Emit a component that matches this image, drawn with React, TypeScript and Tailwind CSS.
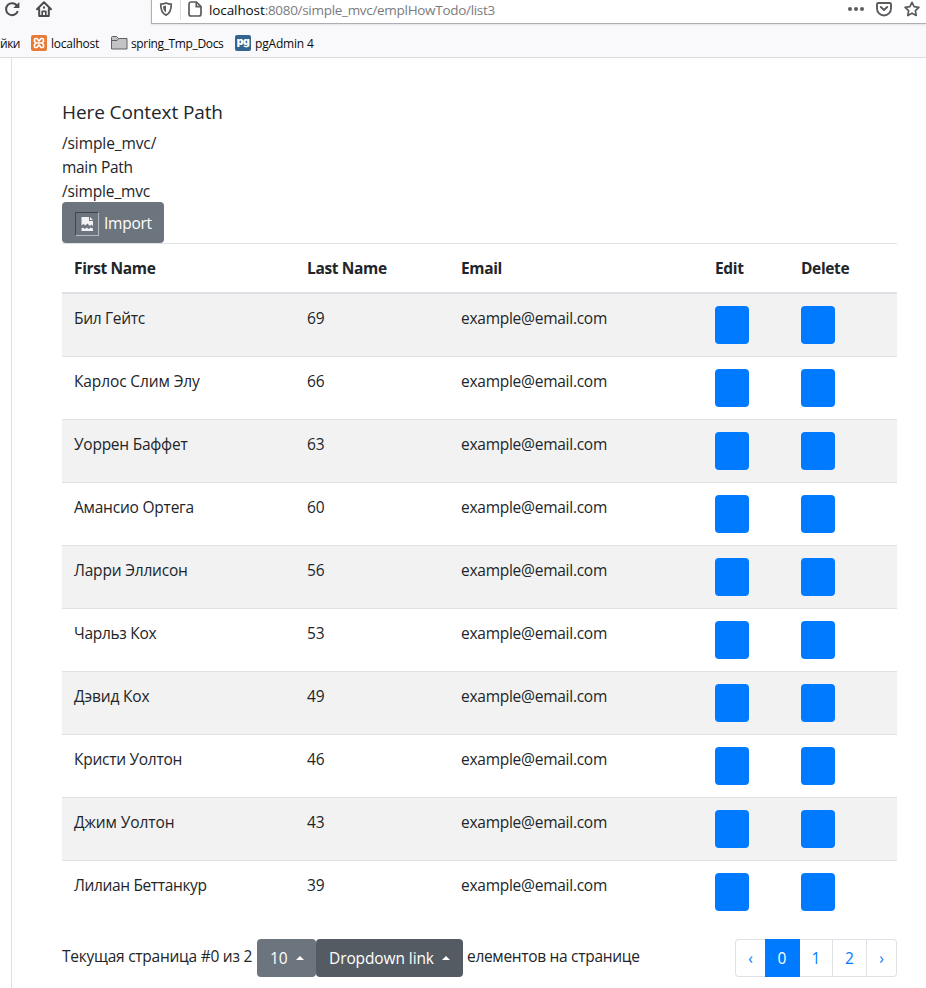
import type { ReactNode } from "react";

const people = [
  { name: "Бил Гейтс", last: 69, fit: "tracking-[-0.3px]" },
  { name: "Карлос Слим Элу", last: 66, fit: "tracking-[-0.12px]" },
  { name: "Уоррен Баффет", last: 63, fit: "tracking-[-0.25px]" },
  { name: "Амансио Ортега", last: 60, fit: "tracking-[-0.22px]" },
  { name: "Ларри Эллисон", last: 56, fit: "tracking-[-0.2px]" },
  { name: "Чарльз Кох", last: 53, fit: "tracking-[-0.3px]" },
  { name: "Дэвид Кох", last: 49, fit: "tracking-[-0.15px]" },
  { name: "Кристи Уолтон", last: 46, fit: "tracking-[-0.27px]" },
  { name: "Джим Уолтон", last: 43, fit: "tracking-[-0.1px]" },
  { name: "Лилиан Беттанкур", last: 39, fit: "tracking-[-0.36px]" },
];

const grid = "grid grid-cols-[233px_154px_254px_86px_108px]";

function BrowserBar() {
  return (
    <header className="h-[58px] overflow-hidden border-b border-[#dcdcde] bg-[#f9f9fb] text-[#0c0c0d]">
      <div className="flex h-6 items-start">
        <svg className="ml-1 mt-px h-4 w-4 shrink-0" viewBox="0 0 16 16" fill="none" stroke="#4a4a4f" strokeWidth="2">
          <path d="M13.3 5.2A6 6 0 1 0 13.8 10" />
          <path d="M15.4 1v6H9.2z" fill="#4a4a4f" stroke="none" />
        </svg>
        <svg className="ml-4 mt-px h-4 w-4 shrink-0" viewBox="0 0 16 16" fill="none" stroke="#4a4a4f" strokeWidth="2" strokeLinejoin="round" strokeLinecap="round">
          <path d="M1 8.2 8 1.2l7 7M3.2 8v7h9.6V8" />
          <path d="M6.2 15v-4.6h3.6V15" strokeWidth="1.6" />
          <path d="M8 6.2v.6" />
        </svg>
        <div className="ml-[99px] flex h-6 flex-1 border-b border-l border-[#aeaeb2] bg-white shadow-[0_1px_2px_#00000018]">
          <svg className="ml-[7px] mt-[2px] h-[14px] w-[14px] shrink-0" viewBox="0 0 14 14">
            <path d="M7 1c2 .9 3.800 1.200 5.300 1.200 0 5-.9 9-5.300 10.900C2.600 11.200 1.700 7.200 1.700 2.200 3.200 2.200 5 1.900 7 1z" fill="none" stroke="#5b5b5f" strokeWidth="1.700" strokeLinejoin="round" />
            <path d="M7 3.600c-1 .4-2 .6-3 .7.1 2.800.9 5 3 6.200z" fill="#5b5b5f" />
          </svg>
          <div className="ml-[7px] h-5 w-px bg-[#dedee0]" />
          <svg className="ml-[7px] mt-px h-4 w-[14px] shrink-0" viewBox="0 0 14 16" fill="none" stroke="#5b5b5f" strokeWidth="1.700" strokeLinejoin="round">
            <path d="M3 1h5.500L13 5.500V13a2 2 0 0 1-2 2H3a2 2 0 0 1-2-2V3a2 2 0 0 1 2-2z" />
            <path d="M8.300 1v4.700H13" />
          </svg>
          <div className="ml-[7px] flex-1 whitespace-nowrap text-[13.5px] leading-[20px] tracking-[-0.3px] text-[#7b7b7e]">
            <span className="tracking-[-0.1px] text-[#0c0c0d]">localhost</span>:8080/simple_mvc/emplHowTodo/list3
          </div>
          <svg className="mr-3 mt-[2px] h-[14px] w-4" viewBox="0 0 16 14" fill="#5b5b5f">
            <circle cx="2" cy="7" r="2" />
            <circle cx="8" cy="7" r="2" />
            <circle cx="14" cy="7" r="2" />
          </svg>
          <svg className="mr-3 mt-px h-4 w-4" viewBox="0 0 16 16" fill="none" stroke="#5b5b5f" strokeWidth="1.900" strokeLinecap="round" strokeLinejoin="round">
            <path d="M2.300 2h11.400q1.300 0 1.300 1.300V7.500a7 7 0 0 1-14 0V3.300Q1 2 2.300 2z" />
            <path d="m4.800 6 3.200 3 3.200-3" />
          </svg>
          <svg className="mr-[5px] mt-px h-4 w-[17px]" viewBox="0 0 17 16" fill="none" stroke="#5b5b5f" strokeWidth="1.700" strokeLinejoin="round">
            <path d="m8 1.300 2.100 4.300 4.800.7-3.500 3.400.8 4.800L8 12.200l-4.200 2.300.8-4.800L1.100 6.300l4.800-.7z" />
          </svg>
        </div>
      </div>
      <div className="flex h-[33px] items-start whitespace-nowrap pt-[11px] text-[12px] leading-[17px]">
        <span className="w-[19px] text-[12px] tracking-[-0.500px]">йки</span>
        <svg className="ml-3 h-4 w-4" viewBox="0 0 16 16">
          <rect width="16" height="16" rx="2" fill="#e77a35" />
          <path d="M4.500 3.500h1.400L8 6l2.100-2.500h1.400q1 0 1 1v1.700L11.200 8l1.300 1.700v1.800q0 1-1 1h-1.400L8 10l-2.100 2.500H4.500q-1 0-1-1V9.700L4.800 8 3.500 6.200V4.500q0-1 1-1zM4.800 8h6.400" fill="none" stroke="#fff" strokeWidth="1.700" />
        </svg>
        <span className="ml-1 w-[49px] tracking-[-0.25px]">localhost</span>
        <svg className="ml-[11px] h-4 w-[17px]" viewBox="0 0 17 16">
          <path d="M.5 14V2.500q0-1 1-1h4l2 2h8.500V14z" fill="#c3c3c5" stroke="#606064" />
          <path d="M1 5.500h5l1.500-1.500" fill="none" stroke="#606064" />
        </svg>
        <span className="ml-[3px] w-[93px] tracking-[-0.36px]">spring_Tmp_Docs</span>
        <span className="ml-[11px] flex h-4 w-4 justify-center rounded-[2px] bg-[#326690] font-['Inter','Open_Sans',sans-serif] text-[10.500px] font-black leading-[14px] tracking-[-0.500px] text-white">pg</span>
        <span className="ml-1 tracking-[-0.18px]">pgAdmin 4</span>
      </div>
    </header>
  );
}

function BlueButton({ label }: { label: string }) {
  return <button aria-label={label} className="block h-[38px] w-[34px] rounded-[4px] bg-[#007bff]" />;
}

function PageLink({ children, className }: { children: ReactNode; className: string }) {
  return <a className={`flex h-[38px] items-center justify-center border-y border-r ${className}`}>{children}</a>;
}

function CaretUp() {
  return <span className="ml-2 h-0 w-0 border-x-[4.800px] border-b-[4.800px] border-x-transparent border-b-white" />;
}

export default function App() {
  return (
    <div className="h-[988px] w-[926px] overflow-hidden bg-white font-['Open_Sans','Noto_Sans',sans-serif] text-[15.500px] leading-6 text-[#212529]">
      <BrowserBar />
      <main className="ml-[11px] h-[930px] border-l border-[#e0e0e2] pl-[50px] pt-[42px]">
        <h5 className="mb-[7px] text-[19px] leading-6"><span className="tracking-[-0.1px]">Here Context Path</span></h5>
        <p><span className="tracking-[-0.1px]">/simple_mvc/</span></p>
        <p><span className="tracking-[-0.3px]">main Path</span></p>
        <p className="h-[23px]"><span className="tracking-[-0.15px]">/simple_mvc</span></p>
        <button className="flex h-[41px] w-[102px] items-center rounded-[4px] bg-[#6c757d] pl-[13px] pt-0.5 text-white">
          <span className="mr-[5px] flex h-6 w-6 items-center justify-center border border-b-[#b6babe] border-l-[#41464b] border-r-[#b6babe] border-t-[#41464b]">
            <svg width="13" height="14" viewBox="0 0 13 14" fill="#f1f2f3">
              <path d="M.5 0h7.500v4H12v5.500L10.500 7.500 8.800 9 6.500 6.500 4.300 8.500 2.500 7 .5 8.500z" />
              <path d="M9 0 12 3H9zM.5 11.500l1.500-1 1.800 1.500 2-1.500 2 1.500 2-1.500 2.200 1V14H.5z" />
            </svg>
          </span>
          <span className="pb-[2px] tracking-[-0.25px]">Import</span>
        </button>
        <section className="w-[835px]">
          <div className={`${grid} h-[51px] border-b-2 border-t border-[#dee2e6] pt-3 font-bold`}>
            {["First Name", "Last Name", "Email", "Edit", "Delete"].map((title) => (
              <div key={title} className="pl-3"><span className="tracking-[-0.36px]">{title}</span></div>
            ))}
          </div>
          {people.map((person, i) => (
            <div key={person.name} className={`${grid} pb-3 pt-3 ${i ? "border-t border-[#dee2e6]" : ""} ${i % 2 ? "bg-white" : "bg-[#f2f2f2]"}`}>
              <div className="pl-3"><span className={person.fit}>{person.name}</span></div>
              <div className="pl-3"><span>{person.last}</span></div>
              <div className="pl-3"><span className="tracking-[-0.26px]">example@email.com</span></div>
              <div className="pl-3"><BlueButton label="Edit" /></div>
              <div className="pl-3"><BlueButton label="Delete" /></div>
            </div>
          ))}
        </section>
        <footer className="mt-4 flex h-[38px] w-[835px] items-center whitespace-nowrap">
          <div className="w-[195px] pb-1"><span className="tracking-[-0.25px]">Текущая страница #0 из 2</span></div>
          <button className="flex h-[38px] w-[59px] items-center rounded-[4px] bg-[#6c757d] pl-[13px] text-white"><span>10</span><CaretUp /></button>
          <button className="flex h-[38px] w-[147px] items-center rounded-[4px] bg-[#545b62] pl-[13px] text-white"><span className="tracking-[-0.1px]">Dropdown link</span><CaretUp /></button>
          <div className="pb-1 pl-1"><span className="tracking-[-0.31px]">елементов на странице</span></div>
          <nav className="ml-auto flex text-[#007bff]">
            <PageLink className="w-[30px] rounded-l-[4px] border-l border-r-0 border-[#dee2e6]">‹</PageLink>
            <PageLink className="w-[35px] border-[#007bff] bg-[#007bff] text-white">0</PageLink>
            <PageLink className="w-[33px] border-[#dee2e6]">1</PageLink>
            <PageLink className="w-[34px] border-[#dee2e6]">2</PageLink>
            <PageLink className="w-[30px] rounded-r-[4px] border-[#dee2e6]">›</PageLink>
          </nav>
        </footer>
      </main>
    </div>
  );
}
